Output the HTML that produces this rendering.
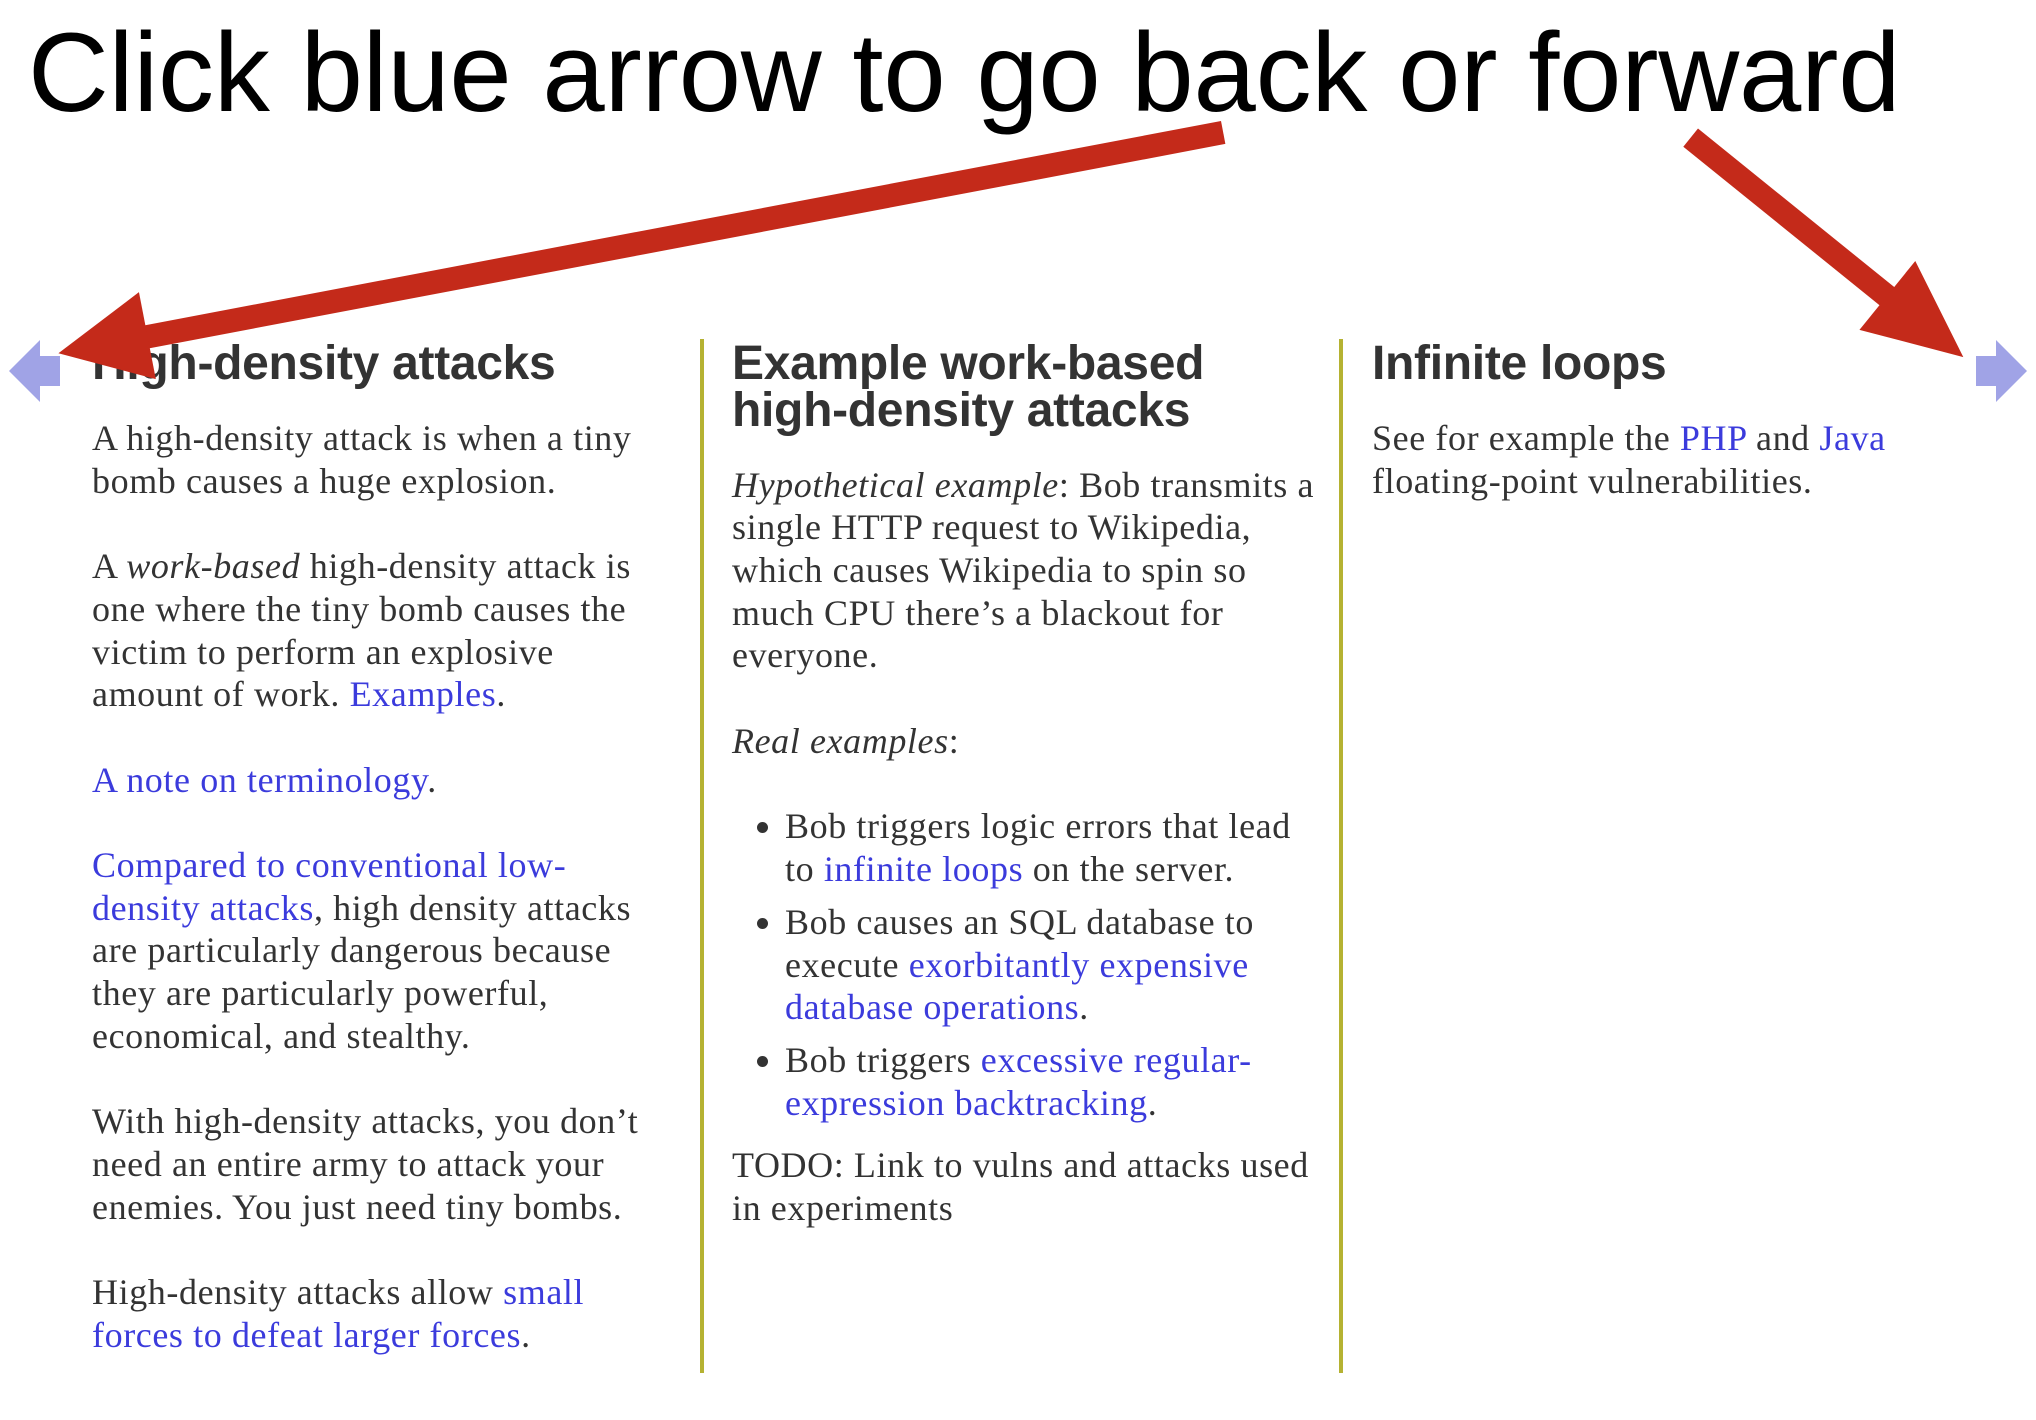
<!DOCTYPE html>
<html><head><meta charset="utf-8"><style>
html,body{margin:0;padding:0;background:#fff;}
body{width:2036px;height:1420px;position:relative;overflow:hidden;}
.title{position:absolute;left:28px;top:0;font-family:"Liberation Sans",sans-serif;font-size:112px;line-height:145px;color:#000;white-space:nowrap;letter-spacing:-0.2px;}
.col{position:absolute;width:600px;color:#333;}
h2{margin:0;font-family:"Liberation Sans",sans-serif;font-weight:bold;font-size:48px;line-height:47px;color:#333;white-space:nowrap;letter-spacing:-0.3px;}
.b{font-family:"Liberation Serif",serif;font-size:36px;line-height:42.7px;white-space:nowrap;letter-spacing:0.6px;}
.b p{margin:0 0 42.7px 0;}
a{color:#3b3bdc;text-decoration:none;}
ul{margin:0 0 19.5px 0;padding:0 0 0 53px;}
li{margin-bottom:10.4px;}
.div{position:absolute;top:339px;width:4px;height:1034px;background:#b5b232;}
svg{position:absolute;left:0;top:0;}
</style></head><body>
<div class="title">Click blue arrow to go back or forward</div>
<div class="div" style="left:700px"></div>
<div class="div" style="left:1339px"></div>

<div class="col" style="left:92px;top:340px">
<h2>High-density attacks</h2>
<div class="b" style="margin-top:30px">
<p>A high-density attack is when a tiny<br>bomb causes a huge explosion.</p>
<p>A <i>work-based</i> high-density attack is<br>one where the tiny bomb causes the<br>victim to perform an explosive<br>amount of work. <a>Examples</a>.</p>
<p><a>A note on terminology</a>.</p>
<p><a>Compared to conventional low-<br>density attacks</a>, high density attacks<br>are particularly dangerous because<br>they are particularly powerful,<br>economical, and stealthy.</p>
<p>With high-density attacks, you don’t<br>need an entire army to attack your<br>enemies. You just need tiny bombs.</p>
<p>High-density attacks allow <a>small<br>forces to defeat larger forces</a>.</p>
</div></div>

<div class="col" style="left:732px;top:340px">
<h2>Example work-based<br>high-density attacks</h2>
<div class="b" style="margin-top:29.5px">
<p><i>Hypothetical example</i>: Bob transmits a<br>single HTTP request to Wikipedia,<br>which causes Wikipedia to spin so<br>much CPU there’s a blackout for<br>everyone.</p>
<p><i>Real examples</i>:</p>
<ul>
<li>Bob triggers logic errors that lead<br>to <a>infinite loops</a> on the server.</li>
<li>Bob causes an SQL database to<br>execute <a>exorbitantly expensive<br>database operations</a>.</li>
<li>Bob triggers <a>excessive regular-<br>expression backtracking</a>.</li>
</ul>
<p>TODO: Link to vulns and attacks used<br>in experiments</p>
</div></div>

<div class="col" style="left:1372px;top:340px">
<h2>Infinite loops</h2>
<div class="b" style="margin-top:30px">
<p>See for example the <a>PHP</a> and <a>Java</a><br>floating-point vulnerabilities.</p>
</div></div>

<svg width="2036" height="1420" viewBox="0 0 2036 1420">
<polygon points="9,371 40,340 40,356 60,356 60,386 40,386 40,402" fill="#a0a3e6"/>
<polygon points="2027,371 1996,340 1996,356 1976,356 1976,386 1996,386 1996,402" fill="#a0a3e6"/>
<g transform="scale(1.2985)">
<line x1="942" y1="102" x2="110" y2="260" stroke="#c42a1a" stroke-width="18"/>
<polygon points="45,272 107,225 120,292" fill="#c42a1a"/>
<line x1="1302" y1="106" x2="1458" y2="232" stroke="#c42a1a" stroke-width="18"/>
<polygon points="1512,275 1432,254 1475,201" fill="#c42a1a"/>
</g>
</svg>
</body></html>
